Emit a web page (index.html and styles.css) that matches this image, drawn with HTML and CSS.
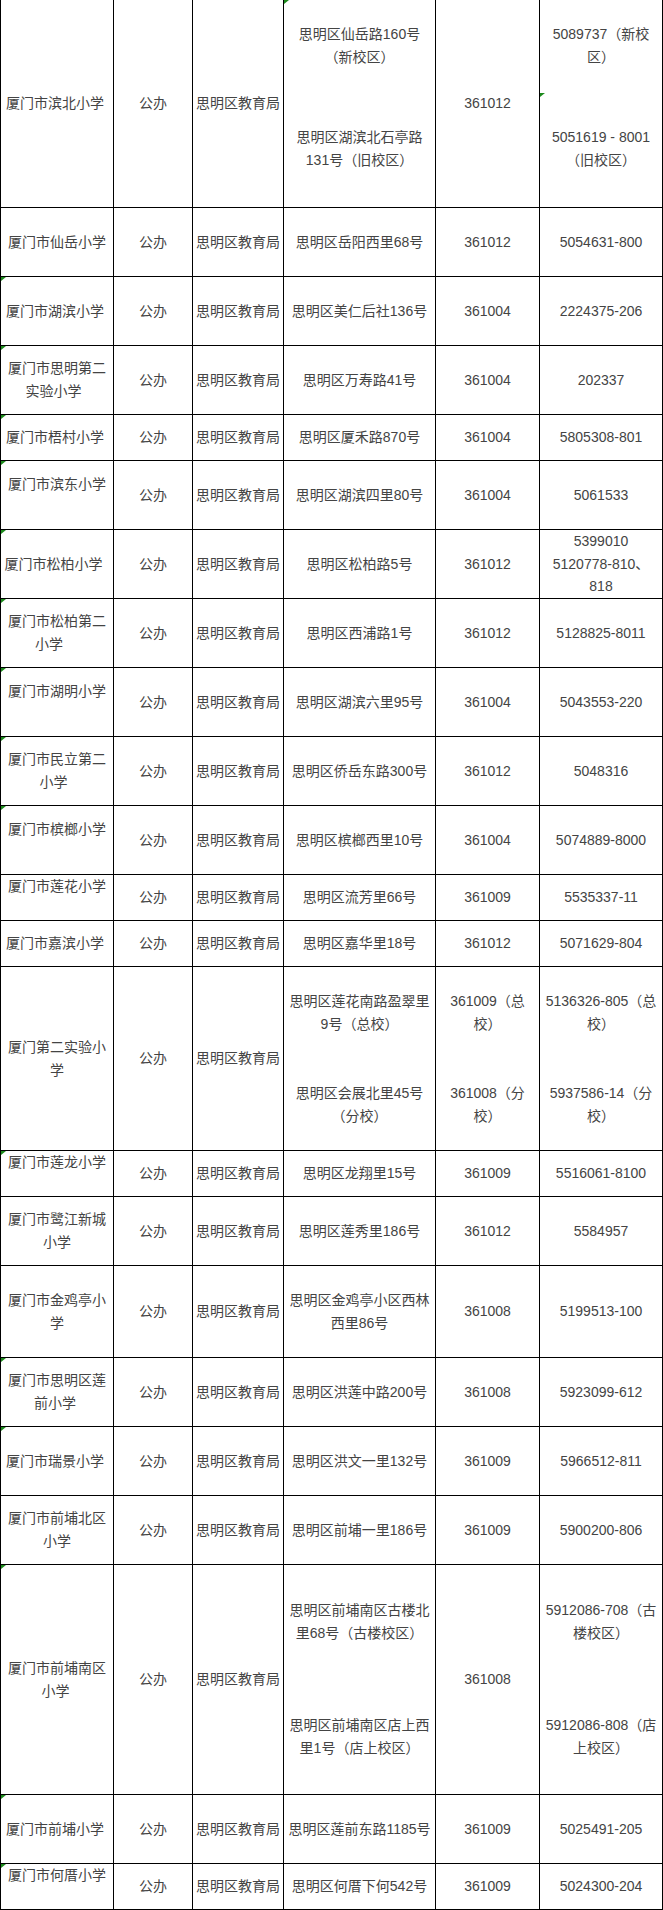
FILE: index.html
```html
<!DOCTYPE html>
<html lang="zh-CN">
<head>
<meta charset="utf-8">
<title>思明区公办小学一览</title>
<link rel="stylesheet" href="styles.css">
</head>
<body>
<table class="schools">
  <colgroup>
    <col class="c1"><col class="c2"><col class="c3"><col class="c4"><col class="c5"><col class="c6">
  </colgroup>
  <tbody>
    <tr class="r208">
      <td>厦门市滨北小学<span class="sp4"></span></td>
      <td>公办</td>
      <td>思明区教育局</td>
      <td class="addr top"><span class="tri"></span><div class="g57">思明区仙岳路160号<br>（新校区）</div><div>思明区湖滨北石亭路<br>131号（旧校区）</div></td>
      <td>361012</td>
      <td class="top"><span class="tri tri-mid"></span><div class="g57">5089737（新校<br>区）</div><div>5051619 - 8001<br>（旧校区）</div></td>
    </tr>
    <tr class="r69">
      <td>厦门市仙岳小学</td>
      <td>公办</td>
      <td>思明区教育局</td>
      <td class="addr">思明区岳阳西里68号</td>
      <td>361012</td>
      <td>5054631-800</td>
    </tr>
    <tr class="r69">
      <td><span class="tri"></span>厦门市湖滨小学<span class="sp4"></span></td>
      <td>公办</td>
      <td>思明区教育局</td>
      <td class="addr">思明区美仁后社136号</td>
      <td>361004</td>
      <td>2224375-206</td>
    </tr>
    <tr class="r69">
      <td><span class="tri"></span>厦门市思明第二实验小学<span class="sp7"></span></td>
      <td>公办</td>
      <td>思明区教育局</td>
      <td class="addr">思明区万寿路41号</td>
      <td>361004</td>
      <td>202337</td>
    </tr>
    <tr class="r46">
      <td><span class="tri"></span>厦门市梧村小学<span class="sp4"></span></td>
      <td>公办</td>
      <td>思明区教育局</td>
      <td class="addr">思明区厦禾路870号</td>
      <td>361004</td>
      <td>5805308-801</td>
    </tr>
    <tr class="r69">
      <td class="up"><span class="tri"></span>厦门市滨东小学</td>
      <td>公办</td>
      <td>思明区教育局</td>
      <td class="addr">思明区湖滨四里80号</td>
      <td>361004</td>
      <td>5061533</td>
    </tr>
    <tr class="r69">
      <td><span class="tri"></span>厦门市松柏小学<span class="sp7"></span></td>
      <td>公办</td>
      <td>思明区教育局</td>
      <td class="addr">思明区松柏路5号</td>
      <td>361012</td>
      <td class="tight">5399010<br>5120778-810、<br>818</td>
    </tr>
    <tr class="r69">
      <td><span class="tri"></span>厦门市松柏第二小学<span class="sp16"></span></td>
      <td>公办</td>
      <td>思明区教育局</td>
      <td class="addr">思明区西浦路1号</td>
      <td>361012</td>
      <td>5128825-8011</td>
    </tr>
    <tr class="r69">
      <td class="up"><span class="tri"></span>厦门市湖明小学</td>
      <td>公办</td>
      <td>思明区教育局</td>
      <td class="addr">思明区湖滨六里95号</td>
      <td>361004</td>
      <td>5043553-220</td>
    </tr>
    <tr class="r69">
      <td><span class="tri"></span>厦门市民立第二小学<span class="sp7"></span></td>
      <td>公办</td>
      <td>思明区教育局</td>
      <td class="addr">思明区侨岳东路300号</td>
      <td>361012</td>
      <td>5048316</td>
    </tr>
    <tr class="r69">
      <td class="up"><span class="tri"></span>厦门市槟榔小学</td>
      <td>公办</td>
      <td>思明区教育局</td>
      <td class="addr">思明区槟榔西里10号</td>
      <td>361004</td>
      <td>5074889-8000</td>
    </tr>
    <tr class="r46">
      <td class="up">厦门市莲花小学</td>
      <td>公办</td>
      <td>思明区教育局</td>
      <td class="addr">思明区流芳里66号</td>
      <td>361009</td>
      <td>5535337-11</td>
    </tr>
    <tr class="r46">
      <td>厦门市嘉滨小学<span class="sp4"></span></td>
      <td>公办</td>
      <td>思明区教育局</td>
      <td class="addr">思明区嘉华里18号</td>
      <td>361012</td>
      <td>5071629-804</td>
    </tr>
    <tr class="r184">
      <td>厦门第二实验小学</td>
      <td>公办</td>
      <td>思明区教育局</td>
      <td class="addr"><div class="g46">思明区莲花南路盈翠里<br>9号（总校）</div><div>思明区会展北里45号<br>（分校）</div></td>
      <td><div class="g46">361009（总<br>校）</div><div>361008（分<br>校）</div></td>
      <td><div class="g46">5136326-805（总<br>校）</div><div>5937586-14（分<br>校）</div></td>
    </tr>
    <tr class="r46">
      <td class="up"><span class="tri"></span>厦门市莲龙小学</td>
      <td>公办</td>
      <td>思明区教育局</td>
      <td class="addr">思明区龙翔里15号</td>
      <td>361009</td>
      <td>5516061-8100</td>
    </tr>
    <tr class="r69">
      <td>厦门市鹭江新城小学</td>
      <td>公办</td>
      <td>思明区教育局</td>
      <td class="addr">思明区莲秀里186号</td>
      <td>361012</td>
      <td>5584957</td>
    </tr>
    <tr class="r92">
      <td>厦门市金鸡亭小学</td>
      <td>公办</td>
      <td>思明区教育局</td>
      <td class="addr">思明区金鸡亭小区西林西里86号</td>
      <td>361008</td>
      <td>5199513-100</td>
    </tr>
    <tr class="r69">
      <td><span class="tri"></span>厦门市思明区莲前小学<span class="sp4"></span></td>
      <td>公办</td>
      <td>思明区教育局</td>
      <td class="addr">思明区洪莲中路200号</td>
      <td>361008</td>
      <td>5923099-612</td>
    </tr>
    <tr class="r69">
      <td><span class="tri"></span>厦门市瑞景小学<span class="sp4"></span></td>
      <td>公办</td>
      <td>思明区教育局</td>
      <td class="addr">思明区洪文一里132号</td>
      <td>361009</td>
      <td>5966512-811</td>
    </tr>
    <tr class="r69">
      <td>厦门市前埔北区小学</td>
      <td>公办</td>
      <td>思明区教育局</td>
      <td class="addr">思明区前埔一里186号</td>
      <td>361009</td>
      <td>5900200-806</td>
    </tr>
    <tr class="r230">
      <td><span class="tri"></span>厦门市前埔南区小学<span class="sp3"></span></td>
      <td>公办</td>
      <td>思明区教育局</td>
      <td class="addr"><div class="g69">思明区前埔南区古楼北<br>里68号（古楼校区）</div><div>思明区前埔南区店上西<br>里1号（店上校区）</div></td>
      <td>361008</td>
      <td><div class="g69">5912086-708（古<br>楼校区）</div><div>5912086-808（店<br>上校区）</div></td>
    </tr>
    <tr class="r69">
      <td><span class="tri"></span>厦门市前埔小学<span class="sp4"></span></td>
      <td>公办</td>
      <td>思明区教育局</td>
      <td class="addr">思明区莲前东路1185号</td>
      <td>361009</td>
      <td>5025491-205</td>
    </tr>
    <tr class="r46">
      <td class="up"><span class="tri"></span>厦门市何厝小学</td>
      <td>公办</td>
      <td>思明区教育局</td>
      <td class="addr">思明区何厝下何542号</td>
      <td>361009</td>
      <td>5024300-204</td>
    </tr>
  </tbody>
</table>
</body>
</html>
```

FILE: styles.css
```css
html, body {
  margin: 0;
  padding: 0;
  background: #fff;
}

body {
  font-family: "Liberation Sans", "Noto Sans CJK SC", sans-serif;
  font-size: 14px;
  line-height: 23px;
  color: #444;
  text-autospace: no-autospace;
  text-spacing-trim: space-all;
}

.schools {
  border-collapse: separate;
  border-spacing: 0;
  table-layout: fixed;
  width: 663px;
}

.c1 { width: 114px; }
.c2 { width: 79px; }
.c3 { width: 91px; }
.c4 { width: 152px; }
.c5 { width: 104px; }
.c6 { width: 123px; }

.schools td {
  position: relative;
  border-right: 1px solid #000;
  border-bottom: 1px solid #000;
  padding: 0 2px;
  text-align: center;
  vertical-align: middle;
}

.schools td:first-child {
  border-left: 1px solid #000;
}

.schools td.addr {
  padding-left: 3px;
  padding-right: 3px;
}

.schools td.top {
  vertical-align: top;
  padding-top: 23px;
}

.schools td.up {
  padding-bottom: 22px;
}

.schools td.tight {
  line-height: 22.5px;
}

.r46 { height: 46px; }
.r69 { height: 69px; }
.r92 { height: 92px; }
.r184 { height: 184px; }
.r208 { height: 208px; }
.r230 { height: 230px; }

.g46 { margin-bottom: 46px; }
.g57 { margin-bottom: 57px; }
.g69 { margin-bottom: 69px; }

.sp3, .sp4, .sp7, .sp16 {
  display: inline-block;
  height: 0;
}
.sp3 { width: 3px; }
.sp4 { width: 4px; }
.sp7 { width: 7px; }
.sp16 { width: 16px; }

.tri {
  position: absolute;
  left: 0;
  top: 0;
  width: 0;
  height: 0;
  border-top: 4px solid #1c8a1c;
  border-right: 5px solid transparent;
}

.tri-mid {
  top: 93px;
}
```
